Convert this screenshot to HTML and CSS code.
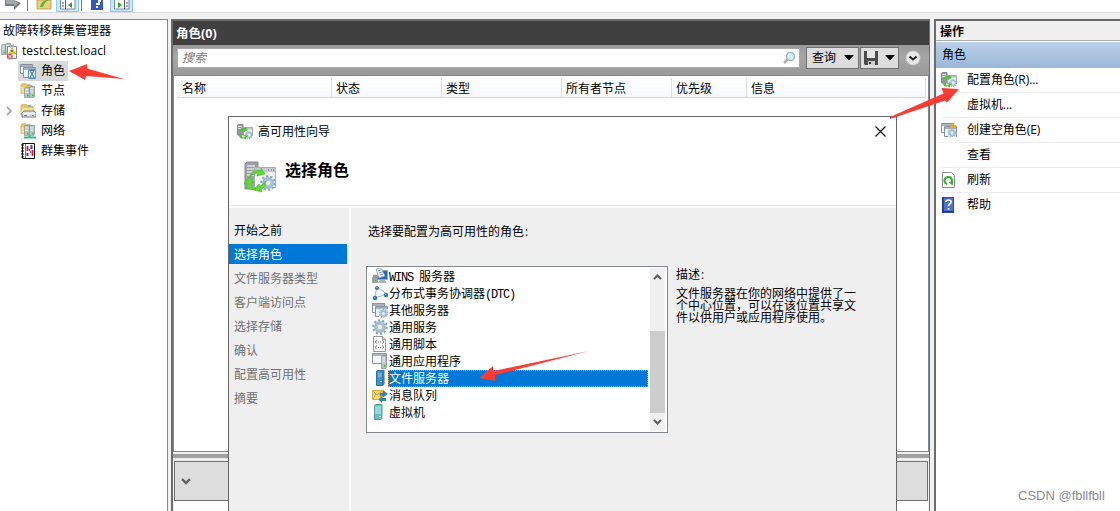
FILE: index.html
```html
<!DOCTYPE html>
<html lang="zh-CN">
<head>
<meta charset="utf-8">
<title>故障转移群集管理器</title>
<link rel="stylesheet" href="styles.css">
</head>
<body>
<svg class="defs" width="0" height="0">
  <defs>
    <symbol id="server" viewBox="0 0 8 14" preserveAspectRatio="none"><path d="M.5 1.500 2 .5h5.500v12L6 13.500H.5z" fill="#b4c3c4" stroke="#78878c" stroke-width=".8"/><path d="M1.500 3h4M1.500 5h4M1.500 7h4" stroke="#eef5f6"/><path d="M4 10h2v2H4z" fill="#3dc62c"/></symbol>
    <symbol id="window" viewBox="0 0 14 11"><path d="M.5.5h13v10H.5z" fill="#f4f6f8" stroke="#7d8b99"/><path d="M1 1h12v2H1z" fill="#a9b8c7"/><path d="M9 2h1m1 0h1" stroke="#fff"/></symbol>
    <symbol id="windows" viewBox="0 0 16 16"><path d="M.5 1.500h12v9H.5z" fill="#f5f7f9" stroke="#8592a0"/><path d="M1 2h11v2H1z" fill="#a5b2bf"/><path d="M3.500 4.500h12v10h-12z" fill="#eef2f5" stroke="#8592a0"/><path d="M4 5h11v2H4z" fill="#a5b2bf"/></symbol>
    <symbol id="gear" viewBox="0 0 16 16"><circle cx="8" cy="8" r="6.700" fill="none" stroke="#86a6c4" stroke-width="2.200" stroke-dasharray="2.200 2"/><circle cx="8" cy="8" r="4.600" fill="#eef5fa" stroke="#9dbbd6" stroke-width="2.600"/><circle cx="8" cy="8" r="2.800" fill="#fff" stroke="#88a4c0" stroke-width=".7"/></symbol>
    <symbol id="folder" viewBox="0 0 16 14"><path d="M1 2.500 2 1h5l1 2h6v9H1z" fill="#e9c760" stroke="#c9a94e" stroke-width=".8"/><path d="M1.500 5h12v6.500h-12z" fill="#f8df8c"/><path d="M8 1.500h4v2H8z" fill="#6db6e4"/></symbol>
    <symbol id="cluster" viewBox="0 0 32 32"><path d="M1 3 3 1h11v25l-2 2H1z" fill="#9da2a6" stroke="#858b8e"/><path d="M3 5h8M3 8h8M3 11h8M3 14h8" stroke="#dce0e2" stroke-width="1.300"/><path d="M10.500 6.500h21v20h-21z" fill="#f4f4f7" stroke="#aaaab4"/><path d="M11 7h20v4H11z" fill="#c9cbd3"/><path d="M24 9h1m2 0h1m1 0h1" stroke="#536078"/><use href="#gear" x="16" y="14" width="16" height="16"/><path d="M5 17C7 10 12 8 17 10V7l4 6-8 2 1-3c-4 0-6 2-9 5zM0 23l5-7 5 6-3-.5q0 5 5 7-11 1-9-6.500zM22 20c0 5-2 7-5 8l1 3-8-2 5-6 .5 2.500q4-2 6.500-5.500z" fill="#62d837" stroke="#48bd30" stroke-width=".7"/></symbol>
    <symbol id="cluster-small" viewBox="0 0 16 16"><path d="M.5 1 1.500.5H6v10H.5z" fill="#949b9e" stroke="#848c8f"/><path d="M1 2.500h4M1 4.500h4" stroke="#dfe4e5"/><path d="M6.500 3.500h9v8h-9z" fill="#f0f2f4" stroke="#a1a8af"/><path d="M7 4h8v1.500H7z" fill="#b9c1c8"/><use href="#gear" x="8" y="7" width="8" height="8"/><path d="M2 7q2-4 6-3V3l3 3-4 2V6Q5 6 2 8zM3 9l3 3H4.500Q5 14 8 14q-5 2-6-2H1zM11 11q-1 3-2 3v1.500L6 14l3-3v1z" fill="#4fc136"/></symbol>
    <symbol id="roles" viewBox="0 0 16 16"><use href="#windows" width="16" height="16"/><path d="M8.500 6.500h7v9h-7z" fill="#e8f3fc" stroke="#5a94c4"/><path d="M9 7h6l-2.500 4 2.500 4H9l2.500-4z" fill="#3b7cb6"/><path d="M10.500 8h3L12 9.500zM10.500 14.500 12 12l1.500 2.500z" fill="#d6ebfa"/></symbol>
    <symbol id="nodes" viewBox="0 0 16 16"><use href="#folder" width="14" height="12"/><use href="#server" x="4" y="4" width="6" height="11"/><use href="#server" x="9" y="3" width="6" height="12"/></symbol>
    <symbol id="storage" viewBox="0 0 16 16"><use href="#folder" width="15" height="14"/><path d="m2 10 2-2h10l2 2v4H2z" fill="#dce1e5" stroke="#747f86"/><path d="M2 10.500h13.500" stroke="#fff"/><path d="M4 12.500h3" stroke="#7b858c"/><path d="M12 12h2v1h-2z" fill="#43c438"/></symbol>
    <symbol id="network" viewBox="0 0 16 16"><use href="#folder" width="14" height="12"/><use href="#server" x="4" y="2" width="6" height="11"/><use href="#server" x="9" y="2" width="6" height="11"/><path d="M4 14.500h12M9.500 12.500v3" stroke="#31b794" stroke-width="2"/></symbol>
    <symbol id="events" viewBox="0 0 16 16"><path d="M2.500.5h12v15h-12z" fill="#fff" stroke="#111"/><path d="M5.500 1v14" stroke="#777"/><path d="M1 2h3M1 5h3M1 8h3M1 11h3M1 14h3" stroke="#111"/><path d="M7.500 3v5M12.500 7v6" stroke="#e01738" stroke-width="1.800"/><path d="M11.500 2v4M7.500 10v3" stroke="#2840d0" stroke-width="2"/><path d="m9 6 2 4" stroke="#a41e65"/></symbol>
    <symbol id="root" viewBox="0 0 18 17"><use href="#server" x="1" y="1" width="5" height="11"/><use href="#server" x="5" y="0" width="6" height="12"/><path d="M7.500 3.500h9v12h-9z" fill="#fff" stroke="#888"/><path d="M10 1.500h4v3h-4z" fill="#aaa"/><path d="m12 5 3.500 6h-7z" fill="#f5d22f" stroke="#aa8b16" stroke-width=".6"/><path d="M12 7v2" stroke="#222"/><circle cx="10" cy="13.500" r="2.800" fill="#d65a64"/><path d="m8.700 12.200 2.600 2.600m0-2.600-2.600 2.600" stroke="#fff"/></symbol>
    <symbol id="newrole" viewBox="0 0 16 16"><use href="#windows" width="16" height="16"/><path d="M7 7h8v8H7z" fill="#d3e2ef"/><use href="#gear" x="7" y="7" width="8" height="8"/><path d="m12 0 1 2.500L16 4l-3 1-1 3-1-3-3-1 3-1.500z" fill="#f5a51d"/></symbol>
    <symbol id="refresh" viewBox="0 0 16 16"><path d="M1.500.5h9l3 3v12h-12z" fill="#fff" stroke="#8c8c8c"/><path d="M6 12q-3-1-2.500-4t4-3 3.500 4l-1 2" fill="none" stroke="#34af34" stroke-width="2"/><path d="m7.500 10 5-.5-1 4z" fill="#34af34"/></symbol>
    <symbol id="help" viewBox="0 0 16 16"><path d="M1 0h12v16H1z" fill="#2849a7"/><path d="M3 1h9v13H3z" fill="#4c72d0"/><path d="M1.500 1v14M2 14.500h11" stroke="#1b347e"/><path d="M5 5q0-2 2.500-2T10 5q0 1.500-1.500 2.200-1 .5-1 2" fill="none" stroke="#fff" stroke-width="1.700"/><path d="M6.700 11h1.700v1.700H6.700z" fill="#fff"/></symbol>
    <symbol id="other" viewBox="0 0 16 16"><use href="#windows" width="16" height="16"/><path d="M7 7h9v8H7z" fill="#dce8f2"/><use href="#gear" x="7" y="7" width="9" height="9"/></symbol>
    <symbol id="wins" viewBox="0 0 16 16"><path d="M5.500 2.500h10v9h-10z" fill="#2865bd" stroke="#9ba8b2"/><path d="m4 1 5-1 4 8-6 2z" fill="#eff6fb" stroke="#88a2b7" stroke-width=".7"/><path d="m6 3 3-1M7 5l3-1M8 7l3-1" stroke="#638dad" stroke-width=".8"/><path d="M6 15h9l-2-3H8z" fill="#aab1b5"/><path d="M.5 9.500h5v5h-5zM1.500 7h3v2h-3z" fill="#9ba29f" stroke="#858c89" stroke-width=".7"/><path d="M2 12h2v2H2z" fill="#72c53f"/></symbol>
    <symbol id="dtc" viewBox="0 0 16 16"><path d="M5 2Q3 8 3 13q7-2 11-4Q12 6 5 2z" fill="#f4f8fb" stroke="#a5b8c8"/><circle cx="5" cy="3" r="2" fill="#3f79ba"/><circle cx="3" cy="13" r="2.300" fill="#2a75bb"/><circle cx="14" cy="10" r="2.200" fill="#2379ba"/><path d="M2.200 12.500h1M4.500 2.500h1M13.200 9.500h1" stroke="#a9d5ef"/></symbol>
    <symbol id="script" viewBox="0 0 16 16"><path d="M1.500.5h9l3 3v12h-12z" fill="#fafafa" stroke="#999"/><path d="M10.500.5v3h3" fill="#ddd" stroke="#999"/><path d="M4.500 4 3.500 6l1 1.500M10.500 4l1 2-1 1.500M6 6h1m1 0h1M4.500 9.500l-1 2 1 1.500M10.500 9.500l1 2-1 1.500M6 11.500h1m1 0h1" fill="none" stroke="#666"/></symbol>
    <symbol id="app" viewBox="0 0 16 16"><path d="M.5.5h14v10H.5z" fill="#f4f6f8" stroke="#8a96a2"/><path d="M1 1h13v2H1z" fill="#a9b5c2"/><use href="#server" x="9" y="2" width="6" height="14"/></symbol>
    <symbol id="fileserver" viewBox="0 0 16 16"><path d="M4.500 1.500 6 .5h6v14l-1.500 1H4.500z" fill="#4293c8" stroke="#2c71a4"/><path d="M6 4h4M6 6h4" stroke="#93cfef"/><path d="M10.500 2v13" stroke="#2874a8"/><path d="M8 11h2v1H8z" fill="#96e1ef"/></symbol>
    <symbol id="vm" viewBox="0 0 16 16"><path d="M2.500 1.500 4 .5h6v14l-1.500 1h-6z" fill="#66bdc3" stroke="#4e9da5"/><path d="M3 3h6M3 5h6M3 7h6M3 9h6" stroke="#caf3f1"/><path d="M7 12h2v1H7z" fill="#fff"/></symbol>
    <symbol id="queue" viewBox="0 0 16 16"><path d="M.5 3.500h10v9H.5z" fill="#f9dd73" stroke="#d6b040"/><path d="m1 4 4 4 5-4M1 12l3-5m6 5L7 7" fill="none" stroke="#cda344"/><path d="M8 6h3V3l5 4-5 3.500V8.700H8zM14 11h-4V9l-3.500 3.500L10 16v-2h4z" fill="#2b82c5"/></symbol>
    <symbol id="down" viewBox="0 0 9 7"><path d="m1 1 3.500 3.500L8 1" fill="none" stroke="currentColor" stroke-width="2.200"/></symbol>
  </defs>
</svg>
<div class="app">
  <div class="toolbar">
    <svg width="140" height="12" viewBox="0 0 140 12"><path d="M5 0h9l7 3-7 7V6H5z" fill="#777c80"/><path d="M6 0h8l4 3-4 4V4H6z" fill="#a4a8ab"/><path d="M27.500 0v11M81.500 0v11" stroke="#777"/><path d="M37 0h14v9H37z" fill="#edcf79" stroke="#b29249" stroke-width=".8"/><path d="M40 7q1-5 6-7h3q-5 2-6 7z" fill="#51b833"/><path d="M56.500-1h22v12.500h-22zM110.500-1h22v12.500h-22z" fill="#cce7fb" stroke="#8acaf6"/><path d="M60.500-1h14.500v10H60.500zM114.500-1H129v10h-14.500z" fill="#fff" stroke="#7c8b99"/><path d="M65.500 0v9M124.500 0v9" stroke="#51606f"/><path d="M62 3h2m-2 3h2M126 3h2m-2 3h2" stroke="#38587b"/><path d="m72 2-4 3 4 3zM118 2l4 3-4 3z" fill="#35a32b"/><path d="M91 0h12v10H91z" fill="#3458bc"/><path d="M96 4h3V1h2M96 7h2" fill="none" stroke="#fff" stroke-width="2"/></svg>
  </div>
  <div class="workspace">
    <nav class="tree">
      <div class="tree-title">故障转移群集管理器</div>
      <div class="tree-root"><svg width="18" height="17"><use href="#root"/></svg><span>testcl.test.loacl</span></div>
      <div class="tree-row"><span class="twist"></span><div class="node selected"><svg width="16" height="16"><use href="#roles"/></svg><span>角色</span></div></div>
      <div class="tree-row"><span class="twist"></span><div class="node"><svg width="16" height="16"><use href="#nodes"/></svg><span>节点</span></div></div>
      <div class="tree-row"><span class="twist"><svg width="6" height="10"><path d="m1 1 4 4-4 4" fill="none" stroke="#999" stroke-width="1.500"/></svg></span><div class="node"><svg width="16" height="16"><use href="#storage"/></svg><span>存储</span></div></div>
      <div class="tree-row"><span class="twist"></span><div class="node"><svg width="16" height="16"><use href="#network"/></svg><span>网络</span></div></div>
      <div class="tree-row"><span class="twist"></span><div class="node"><svg width="16" height="16"><use href="#events"/></svg><span>群集事件</span></div></div>
    </nav>
    <main class="content">
      <h1 class="content-title">角色(0)</h1>
      <div class="filter">
        <div class="search"><i>搜索</i><svg width="14" height="14"><path d="m2 12 4-4" stroke="#b8aaa0" stroke-width="2.500"/><circle cx="8.500" cy="5.500" r="4" fill="#d9f0fc" stroke="#a0b6c6" stroke-width="1.500"/></svg></div>
        <div class="tool query"><span>查询</span><svg width="10" height="6"><path d="M0 0h10L5 5.500z"/></svg></div>
        <div class="tool save"><svg width="14" height="14"><path d="M0 0h14v14H1l-1-1z" fill="#4b4b4b"/><path d="M3 0h8v7H3z" fill="#e5e5e5"/><path d="M4 10h7v4H4z" fill="#ccc"/><path d="M5 11h2v2H5z" fill="#333"/></svg><svg width="10" height="6"><path d="M0 0h10L5 5.500z"/></svg></div>
        <svg class="expand" width="16" height="16"><circle cx="8" cy="8" r="7" fill="#e8e8e8" stroke="#c9c9c9"/><path d="m4.500 6.500 3.500 3 3.500-3" fill="none" stroke="#222" stroke-width="2"/></svg>
      </div>
      <div class="list"><div class="columns"><span>名称</span><span>状态</span><span>类型</span><span>所有者节点</span><span>优先级</span><span>信息</span></div></div>
      <div class="splitter"></div>
      <div class="details"><svg width="10" height="8"><use href="#down"/></svg></div>
    </main>
    <aside class="actions">
      <div class="actions-title">操作</div>
      <div class="actions-group">角色</div>
      <div class="action"><svg width="16" height="16"><use href="#cluster-small"/></svg><span>配置角色(R)...</span></div>
      <div class="action"><span class="noicon"></span><span>虚拟机...</span></div>
      <div class="action"><svg width="16" height="16"><use href="#newrole"/></svg><span>创建空角色(E)</span></div>
      <div class="action"><span class="noicon"></span><span>查看</span></div>
      <div class="action"><svg width="16" height="16"><use href="#refresh"/></svg><span>刷新</span></div>
      <div class="action last"><svg width="16" height="16"><use href="#help"/></svg><span>帮助</span></div>
    </aside>
  </div>

  <section class="dialog">
    <header class="titlebar"><svg width="16" height="16"><use href="#cluster-small"/></svg><span>高可用性向导</span><svg class="close" width="11" height="11"><path d="m.5.5 10 10m0-10-10 10" stroke="#111" stroke-width="1.200"/></svg></header>
    <div class="banner"><svg width="32" height="32"><use href="#cluster"/></svg><h2>选择角色</h2></div>
    <div class="dialog-body">
      <ol class="steps"><li class="done">开始之前</li><li class="current">选择角色</li><li>文件服务器类型</li><li>客户端访问点</li><li>选择存储</li><li>确认</li><li>配置高可用性</li><li>摘要</li></ol>
      <div class="page">
        <p class="prompt">选择要配置为高可用性的角色<span class="colon">:</span></p>
        <div class="picker">
          <div class="listbox">
            <ul>
              <li><svg width="16" height="16"><use href="#wins"/></svg><span><b class="mono">WINS </b>服务器</span></li>
              <li><svg width="16" height="16"><use href="#dtc"/></svg><span>分布式事务协调器<b class="mono">(DTC)</b></span></li>
              <li><svg width="16" height="16"><use href="#other"/></svg><span>其他服务器</span></li>
              <li><svg width="16" height="16"><use href="#gear"/></svg><span>通用服务</span></li>
              <li><svg width="16" height="16"><use href="#script"/></svg><span>通用脚本</span></li>
              <li><svg width="16" height="16"><use href="#app"/></svg><span>通用应用程序</span></li>
              <li class="chosen"><svg width="16" height="16"><use href="#fileserver"/></svg><span>文件服务器</span></li>
              <li><svg width="16" height="16"><use href="#queue"/></svg><span>消息队列</span></li>
              <li><svg width="16" height="16"><use href="#vm"/></svg><span>虚拟机</span></li>
            </ul>
            <div class="scrollbar"><svg class="up" width="9" height="7"><use href="#down"/></svg><div class="thumb"></div><svg width="9" height="7"><use href="#down"/></svg></div>
          </div>
          <div class="description"><div>描述<span class="colon">:</span></div><p>文件服务器在你的网络中提供了一<br>个中心位置，可以在该位置共享文<br>件以供用户或应用程序使用。</p></div>
        </div>
      </div>
    </div>
  </section>

  <svg class="marks" width="1120" height="511" viewBox="0 0 1120 511"><g fill="#fc3b32"><path d="M69 71 87 64v4.500L124 79 86 76l-1 4z"/><path d="m959 89-17.500-1 2 5.500L890 117v2l55-18.500 2 2z"/><path d="m479 378 14-12 .5 5L589 351l-94 24 .5 6z"/></g></svg>
  <div class="watermark">CSDN @fbllfbll</div>
</div>
</body>
</html>
```
FILE: styles.css
```css
* { box-sizing: border-box; }
body { margin: 0; background: #f0f0f0; color: #000; font: 12px/18px "Open Sans", "Noto Sans CJK SC", sans-serif; overflow: hidden; }
h1, h2, p, ul, ol { margin: 0; padding: 0; list-style: none; }
svg { flex: none; display: block; }
.defs { position: absolute; }
.app { position: relative; display: flex; flex-direction: column; width: 1120px; height: 511px; overflow: hidden; }
.toolbar { height: 13px; flex: none; background: #fff; border-bottom: 1px solid #dadada; }
.workspace { flex: 1; display: grid; grid-template-columns: 168px 759px 1fr; column-gap: 3px; padding-top: 6px; min-height: 0; }

.tree { background: #fff; border: solid #828790; border-width: 1px 1px 0 0; padding-top: 1px; }
.tree-title { height: 20px; line-height: 20px; padding-left: 3px; }
.tree-root { display: flex; gap: 4px; align-items: center; height: 20px; letter-spacing: .08px; }
.tree-row { display: flex; height: 20px; }
.twist { width: 18px; padding: 5px 0 0 6px; }
.node { display: flex; align-items: center; gap: 5px; padding: 0 3px 0 2px; height: 20px; }
.selected { background: #d9d9d9; }

.content { display: flex; flex-direction: column; border: solid #6c6c6c; border-width: 2px 1px 0 2px; background: #f0f0f0; min-width: 0; min-height: 0; }
.content-title { height: 24px; flex: none; background: #404040; color: #fff; font: bold 12.5px/26px "Open Sans", "Noto Sans CJK SC", sans-serif; padding-left: 3px; }
.filter { height: 31px; flex: none; display: flex; align-items: flex-start; background: linear-gradient(#999, #a6a6a6 40%, #999); padding: 3px 7px 0 4px; border-bottom: 1px solid #828790; }
.search { width: 623px; height: 20px; display: flex; align-items: center; justify-content: space-between; background: #fff; border: 1px solid #aaa; padding: 0 3px 0 4px; color: #777; }
.tool { height: 22px; margin-top: -1px; background: #ddd; border: 1px solid #707070; display: flex; align-items: center; justify-content: space-between; }
.query { width: 53px; margin-left: 6px; padding: 0 4px 0 5px; }
.save { width: 39px; margin-left: 1px; padding: 0 3px; }
.expand { margin: 2px 0 0 6px; }
.list { height: 376px; flex: none; background: #fff; border: 1px solid #828790; border-top: 0; padding: 2px 2px 0 3px; }
.columns { display: grid; grid-template-columns: 155px 110px 120px 110px 75px 1fr; height: 20px; line-height: 21px; border-bottom: 1px solid #d5d5d5; background: linear-gradient(#fff, #f7f8fa); }
.columns span { height: 19px; padding-left: 4px; border-right: 1px solid #dedede; }
.columns span:first-child { padding-left: 5px; }
.splitter { height: 4px; flex: none; margin-top: 2px; background: #a0a0a0; }
.details { height: 40px; flex: none; margin: 3px 1px 0 1px; border: 1px solid #707070; background: #ddd; padding: 16px 6px; color: #606060; box-shadow: 0 20px #fff; }

.actions { background: #fff; border: solid #6c6c6c; border-width: 2px 0 0 2px; margin-left: 1px; }
.actions-title { height: 20px; background: #f0f0f0; border-bottom: 1px solid #aaa; padding-left: 4px; font-weight: bold; line-height: 22px; }
.actions-group { height: 26px; margin-top: 1px; padding-left: 6px; line-height: 26px; background: linear-gradient(#bad1e9, #9ab6d7); }
.action { height: 25px; margin-left: 5px; border-bottom: 1px solid #eee; display: flex; gap: 10px; align-items: center; letter-spacing: -.05px; }
.noicon { width: 16px; }
.last { border-bottom: 0; height: 24px; }

.dialog { position: absolute; left: 228px; top: 116px; width: 669px; height: 396px; display: flex; flex-direction: column; background: #fff; border: 1px solid #666; }
.titlebar { height: 29px; display: flex; align-items: center; gap: 5px; padding: 0 10px 0 8px; }
.close { margin-left: auto; }
.banner { height: 60px; border-bottom: 1px solid #eaeaea; display: flex; gap: 9px; padding: 15px 0 0 15px; }
.banner h2 { font: bold 16px/16px "Noto Sans CJK SC", sans-serif; }
.dialog-body { flex: 1; margin-top: 2px; display: flex; background: #efefef; }
.steps { width: 122px; flex: none; border-right: 2px solid #fff; padding-top: 10px; line-height: 26px; color: #707070; }
.steps li { padding-left: 5px; height: 24px; }
.steps .done { color: #000; }
.steps .current { background: #0078d7; color: #fff; height: 20px; margin: 2px 2px 2px 0; line-height: 21px; }
.page { padding: 13px 0 0 15px; }
.prompt { padding-left: 2px; line-height: 22px; height: 20px; }
.colon { display: inline-block; width: 6px; padding-left: 1px; }
.picker { display: flex; gap: 8px; margin-top: 25px; }
.listbox { width: 302px; height: 167px; display: flex; background: #fff; border: 1px solid #828790; padding: 1px 2px 1px 5px; }
.listbox ul { width: 276px; }
.listbox li { height: 17px; display: flex; line-height: 17px; }
.listbox li span { flex: 1; padding-left: 1px; white-space: nowrap; }
.listbox .chosen span { background: #0078d7; color: #fff; outline: 1px dotted #e79b50; outline-offset: -1px; }
.mono { font: 12px/12px "Liberation Mono", monospace; letter-spacing: -1.200px; }
.scrollbar { width: 15px; margin-left: 2px; background: #f0f0f0; display: flex; flex-direction: column; align-items: center; color: #606060; padding: 5px 0; }
.up { transform: rotate(180deg); }
.thumb { width: 15px; height: 83px; background: #cdcdcd; margin: 51px 0 6px; }
.description { width: 190px; line-height: 17px; }
.description p { margin-top: 5px; line-height: 12px; }

.marks { position: absolute; left: 0; top: 0; pointer-events: none; }
.watermark { position: absolute; left: 1018px; top: 487px; font: 13px/18px "Liberation Sans", Arial, sans-serif; color: #8c8c8c; white-space: nowrap; }
```
